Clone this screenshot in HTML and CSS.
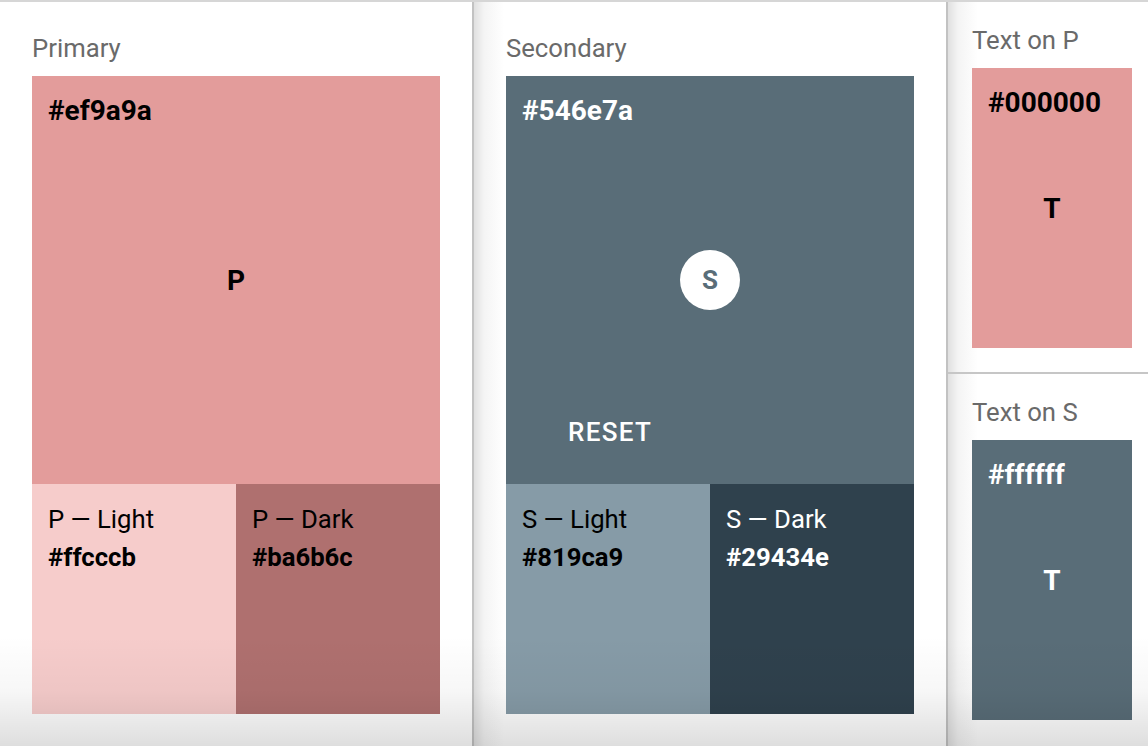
FILE: index.html
```html
<!DOCTYPE html>
<html>
<head>
<meta charset="utf-8">
<link rel="stylesheet" href="styles.css">
</head>
<body>
<div class="page">
  <section class="panel panel-main">
    <h2 class="title">Primary</h2>
    <div class="swatch swatch-big primary">
      <span class="hex hex-big">#ef9a9a</span>
      <span class="letter">P</span>
    </div>
    <div class="variants">
      <div class="variant p-light">
        <span class="label">P — Light</span>
        <span class="hex">#ffcccb</span>
      </div>
      <div class="variant p-dark">
        <span class="label">P — Dark</span>
        <span class="hex">#ba6b6c</span>
      </div>
    </div>
  </section>
  <section class="panel panel-main panel-sep">
    <h2 class="title">Secondary</h2>
    <div class="swatch swatch-big secondary">
      <span class="hex hex-big light-text">#546e7a</span>
      <span class="circle">S</span>
      <span class="reset">RESET</span>
    </div>
    <div class="variants">
      <div class="variant s-light">
        <span class="label">S — Light</span>
        <span class="hex">#819ca9</span>
      </div>
      <div class="variant s-dark light-text">
        <span class="label">S — Dark</span>
        <span class="hex">#29434e</span>
      </div>
    </div>
  </section>
  <section class="panel-text panel-sep">
    <div class="text-block">
      <h2 class="title">Text on P</h2>
      <div class="swatch swatch-small primary">
        <span class="hex hex-big">#000000</span>
        <span class="letter letter-t">T</span>
      </div>
    </div>
    <div class="text-block text-block-sep">
      <h2 class="title">Text on S</h2>
      <div class="swatch swatch-small secondary light-text">
        <span class="hex hex-big">#ffffff</span>
        <span class="letter letter-t">T</span>
      </div>
    </div>
  </section>
  <div class="fade"></div>
</div>
</body>
</html>
```

FILE: styles.css
```css
* { box-sizing: border-box; }
html, body { margin: 0; padding: 0; }
body {
  font-family: Roboto, "Liberation Sans", sans-serif;
  background: #fff;
  color: #000;
  overflow: hidden;
}
.page {
  position: relative;
  display: flex;
  height: 746px;
  border-top: 2px solid #d6d6d6;
}
.panel {
  width: 472px;
  padding: 32px 32px 0 32px;
  flex: none;
}
.panel-sep {
  border-left: 2px solid #c2c2c2;
  background: linear-gradient(to right, #e0e0e0 0, #f4f4f4 10px, #fff 30px);
}
.panel-main.panel-sep { width: 474px; }
.title {
  margin: 0 0 14px 0;
  font-size: 25.7px;
  line-height: 28px;
  font-weight: 400;
  color: #6a6a6a;
}
.swatch {
  display: grid;
  grid-template-areas: "cell";
}
.swatch > * { grid-area: cell; }
.swatch-big { width: 408px; height: 408px; }
.primary { background: #e39c9b; }
.secondary { background: #596d78; }
.hex {
  font-weight: 700;
  font-size: 25.7px;
  line-height: 38px;
}
.hex-big {
  align-self: start;
  justify-self: start;
  font-size: 28px;
  line-height: 34px;
  margin: 18px 0 0 16px;
}
.letter {
  align-self: center;
  justify-self: center;
  font-size: 28px;
  font-weight: 700;
}
.light-text { color: #fff; }
.circle {
  align-self: center;
  justify-self: center;
  width: 60px;
  height: 60px;
  border-radius: 50%;
  background: #fff;
  color: #596d78;
  font-weight: 700;
  font-size: 26px;
  display: flex;
  align-items: center;
  justify-content: center;
}
.reset {
  align-self: end;
  justify-self: start;
  margin: 0 0 38px 62px;
  font-size: 26px;
  letter-spacing: 1.3px;
  line-height: 28px;
  font-weight: 500;
  color: #fff;
}
.variants {
  display: flex;
  width: 408px;
  height: 230px;
}
.variant {
  flex: 1;
  display: flex;
  flex-direction: column;
  padding: 16px 16px 0 16px;
}
.label {
  font-size: 25.7px;
  line-height: 38px;
  font-weight: 400;
}
.p-light { background: #f6cccb; }
.p-dark { background: #af706f; }
.s-light { background: #869ba7; }
.s-dark { background: #2f414d; }
.panel-text {
  flex: 1;
  display: flex;
  flex-direction: column;
}
.text-block {
  padding: 24px 0 24px 24px;
}
.text-block-sep {
  border-top: 2px solid #c6c6c6;
}
.swatch-small { width: 160px; height: 280px; }
.swatch-small .hex-big { margin-left: 16px; }
.letter-t { font-size: 28px; }
.fade {
  position: absolute;
  left: 0;
  right: 0;
  bottom: 0;
  height: 110px;
  pointer-events: none;
  background: linear-gradient(to bottom, rgba(0,0,0,0) 0, rgba(0,0,0,0.03) 50%, rgba(0,0,0,0.13) 100%);
}
```
